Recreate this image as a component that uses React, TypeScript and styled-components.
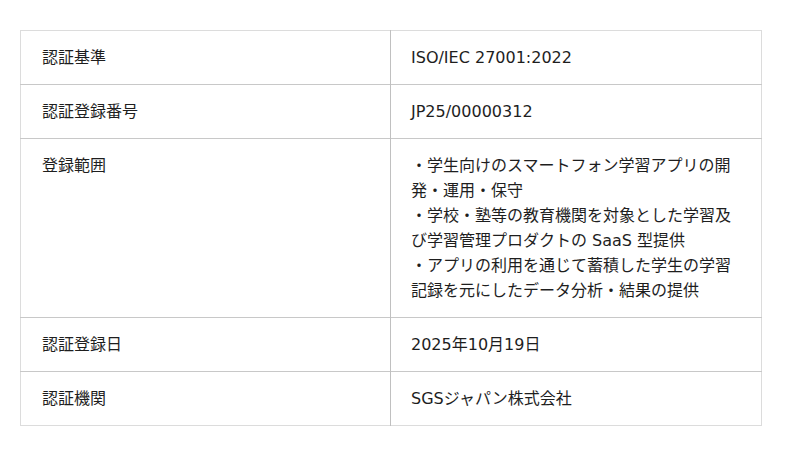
import React from "react";
import styled, { createGlobalStyle } from "styled-components";

const GlobalStyle = createGlobalStyle`
  html, body {
    margin: 0;
    padding: 0;
    background: #ffffff;
  }
  body {
    font-family: "DejaVu Sans", "Noto Sans CJK JP", sans-serif;
    color: #1e1e1e;
  }
`;

const Page = styled.div`
  width: 800px;
  height: 456px;
  padding: 30px 38px 0 20px;
  box-sizing: border-box;
`;

const Table = styled.table`
  width: 742px;
  border-collapse: collapse;
  border: 1px solid #dcdcdc;
  font-size: 16px;
  line-height: 25px;
`;

const Row = styled.tr`
  & + & {
    border-top: 1px solid #c8c8c8;
  }
`;

const Cell = styled.td<{ $head?: boolean }>`
  width: ${(p) => (p.$head ? "370px" : "auto")};
  padding: 14px 21px 14px ${(p) => (p.$head ? "21px" : "20px")};
  vertical-align: top;
  text-align: left;
  box-sizing: border-box;
  border-left: ${(p) => (p.$head ? "none" : "1px solid #c0c0c0")};
  color: #1e1e1e;
`;

const Line = styled.div``;

const rows: { label: string; value: React.ReactNode }[] = [
  { label: "認証基準", value: "ISO/IEC 27001:2022" },
  { label: "認証登録番号", value: "JP25/00000312" },
  {
    label: "登録範囲",
    value: (
      <>
        <Line>・学生向けのスマートフォン学習アプリの開発・運用・保守</Line>
        <Line>・学校・塾等の教育機関を対象とした学習及び学習管理プロダクトの SaaS 型提供</Line>
        <Line>・アプリの利用を通じて蓄積した学生の学習記録を元にしたデータ分析・結果の提供</Line>
      </>
    ),
  },
  { label: "認証登録日", value: "2025年10月19日" },
  { label: "認証機関", value: "SGSジャパン株式会社" },
];

export default function App() {
  return (
    <Page>
      <GlobalStyle />
      <Table>
        <tbody>
          {rows.map((r) => (
            <Row key={r.label}>
              <Cell $head>{r.label}</Cell>
              <Cell>{r.value}</Cell>
            </Row>
          ))}
        </tbody>
      </Table>
    </Page>
  );
}
